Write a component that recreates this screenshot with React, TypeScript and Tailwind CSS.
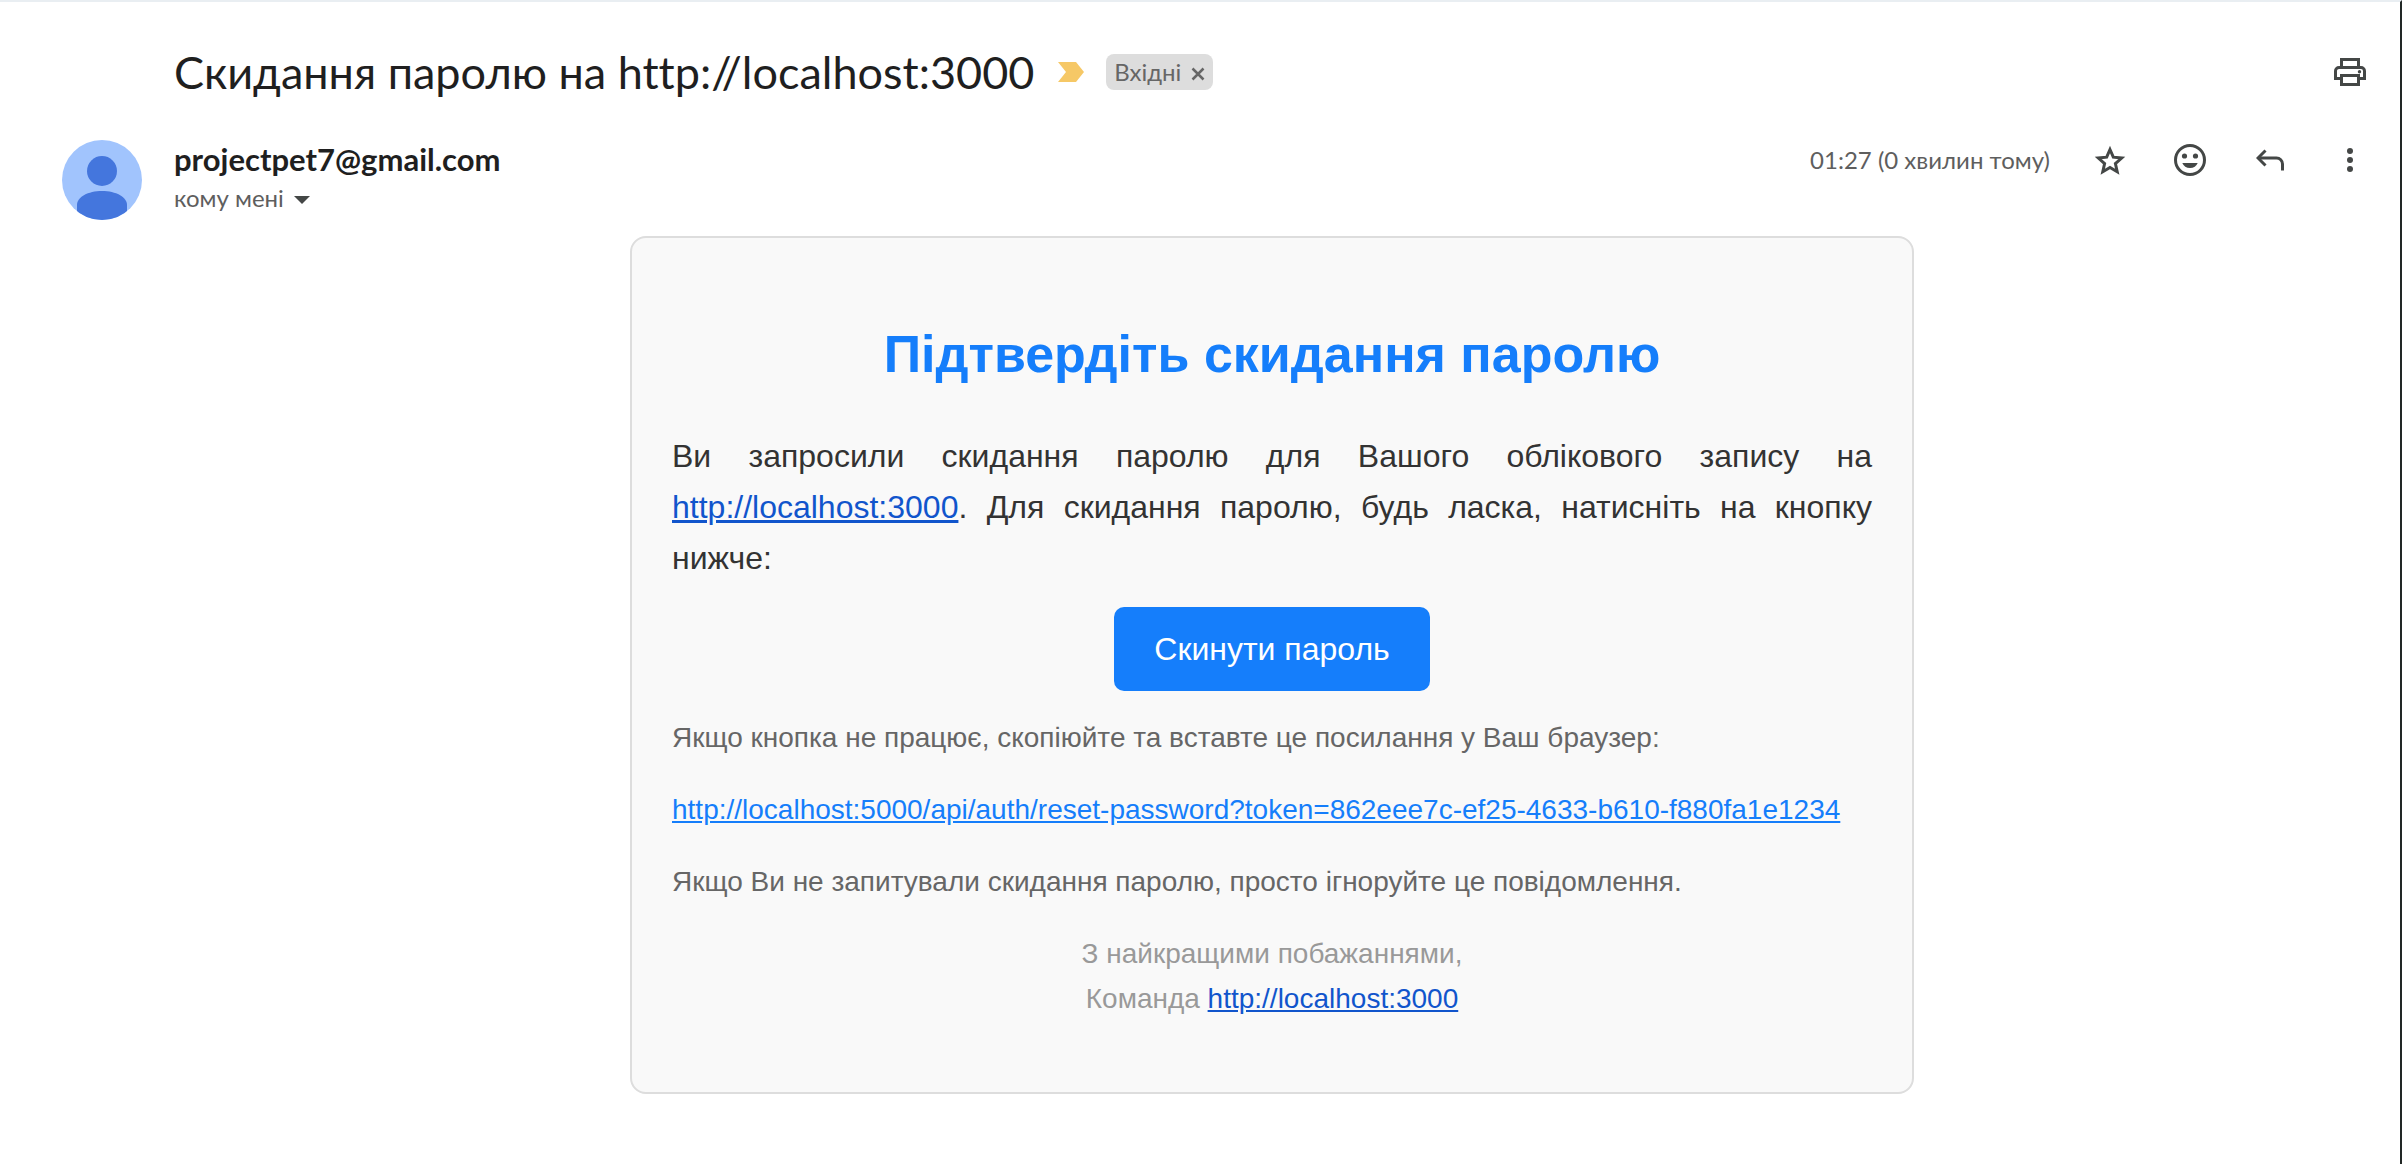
import type { ReactNode } from "react";

const SITE_URL = "http://localhost:3000";
const RESET_URL =
  "http://localhost:5000/api/auth/reset-password?token=862eee7c-ef25-4633-b610-f880fa1e1234";

function IconButton({ label, children }: { label: string; children: ReactNode }) {
  return (
    <button
      type="button"
      aria-label={label}
      className="flex size-10 items-center justify-center text-[#444746]"
    >
      {children}
    </button>
  );
}

function PrintIcon() {
  return (
    <svg viewBox="0 0 32 28" className="h-7 w-8" fill="none" stroke="currentColor" strokeWidth="3">
      <path d="M7.5 9.5V1.5h17v8" />
      <path d="M6 20.5H1.5V13a3.5 3.5 0 0 1 3.5-3.5h22a3.5 3.5 0 0 1 3.5 3.5v7.5H26" />
      <path d="M7.5 17.5h17v9h-17z" />
      <circle cx="25.5" cy="13.8" r="1.7" fill="currentColor" stroke="none" />
    </svg>
  );
}

function StarIcon() {
  return (
    <svg viewBox="0 0 32 30" className="h-[30px] w-8" fill="none" stroke="currentColor" strokeWidth="3">
      <path d="M16 4.5l3.3 7.7 8.4.8-6.3 5.6 1.8 8.2L16 22.5l-7.2 4.3 1.8-8.2L4.3 13l8.4-.8z" />
    </svg>
  );
}

function SmileIcon() {
  return (
    <svg viewBox="0 0 32 32" className="size-8" fill="currentColor">
      <circle cx="16" cy="16" r="14.5" fill="none" stroke="currentColor" strokeWidth="3" />
      <circle cx="10.5" cy="12" r="2.6" />
      <circle cx="21.5" cy="12" r="2.6" />
      <path d="M8.3 19h15.4c-1.2 3.1-4.1 5-7.7 5s-6.5-1.9-7.7-5z" />
    </svg>
  );
}

function ReplyIcon() {
  return (
    <svg viewBox="0 0 28 22" className="h-[22px] w-7" fill="none" stroke="currentColor" strokeWidth="3">
      <path d="M9.5 1.5L2 9l7.5 7.5" />
      <path d="M2 9h18.5a6 6 0 0 1 6 6v6.5" />
    </svg>
  );
}

function MoreIcon() {
  return (
    <svg viewBox="0 0 6 24" className="h-6 w-1.5" fill="currentColor">
      <circle cx="3" cy="3" r="3" />
      <circle cx="3" cy="12" r="3" />
      <circle cx="3" cy="21" r="3" />
    </svg>
  );
}

function Avatar() {
  return (
    <svg viewBox="0 0 80 80" className="size-20 shrink-0 rounded-full" role="img" aria-label="projectpet7">
      <rect width="80" height="80" fill="#a1c4fd" />
      <circle cx="40" cy="31" r="15" fill="#4476dd" />
      <path d="M15 80V65c0-8 11-14 25-14s25 6 25 14v15z" fill="#4476dd" />
    </svg>
  );
}

function SubjectBar() {
  return (
    <div className="flex items-center">
      <h1 className="text-[45px] leading-[56px] text-[#1f1f1f]">Скидання паролю на {SITE_URL}</h1>
      <button type="button" aria-label="Важливе" className="ml-6">
        <svg viewBox="0 0 26 20" className="h-5 w-[26px]" fill="#f6c866">
          <path d="M0 0h18l8 10-8 10H0l8-10z" />
        </svg>
      </button>
      <div className="ml-[22px] flex h-9 items-center gap-2.5 rounded-lg bg-[#ddd] px-2 text-2xl leading-8 text-[#666]">
        <span>Вхідні</span>
        <button type="button" aria-label="Видалити мітку Вхідні">
          <svg viewBox="0 0 14 14" className="mt-1 size-3.5" fill="none" stroke="currentColor" strokeWidth="2.5">
            <path d="M1.5 1.5l11 11M12.5 1.5l-11 11" />
          </svg>
        </button>
      </div>
      <div className="ml-auto">
        <IconButton label="Друкувати">
          <PrintIcon />
        </IconButton>
      </div>
    </div>
  );
}

function SenderRow() {
  return (
    <div className="flex items-start">
      <div className="flex flex-col">
        <span className="text-[31px] leading-[38px] font-bold text-[#1f1f1f]">projectpet7@gmail.com</span>
        <button type="button" className="flex items-center gap-2.5 text-2xl leading-10 text-[#5e5e5e]">
          кому мені
          <svg viewBox="0 0 16 8" className="mt-1 h-2 w-4" fill="#444746">
            <path d="M0 0h16L8 8z" />
          </svg>
        </button>
      </div>
      <div className="ml-auto flex items-center gap-10">
        <time className="text-2xl leading-10 text-[#5e5e5e]">01:27 (0 хвилин тому)</time>
        <IconButton label="Позначити зірочкою">
          <StarIcon />
        </IconButton>
        <IconButton label="Додати реакцію">
          <SmileIcon />
        </IconButton>
        <IconButton label="Відповісти">
          <ReplyIcon />
        </IconButton>
        <IconButton label="Більше">
          <MoreIcon />
        </IconButton>
      </div>
    </div>
  );
}

function MessageCard() {
  return (
    <article className="mx-auto w-full max-w-[1284px] rounded-2xl border-2 border-[#ddd] bg-[#f9f9f9] px-10 pt-[75px] pb-[71px] font-['Liberation_Sans',Arial,sans-serif] text-[28px] leading-[45px] text-[#666]">
      <h2 className="text-center text-[52px] leading-[83px] font-bold text-[#157efb]">
        Підтвердіть скидання паролю
      </h2>
      <p className="mt-[35px] text-justify text-[32px] leading-[51px] text-[#333]">
        Ви запросили скидання паролю для Вашого облікового запису на{" "}
        <a href={SITE_URL} className="text-[#1155cc] underline decoration-[3px]">
          {SITE_URL}
        </a>
        . Для скидання паролю, будь ласка, натисніть на кнопку нижче:
      </p>
      <div className="mt-[23px] flex justify-center">
        <button
          type="button"
          className="rounded-[10px] bg-[#157efb] px-10 py-6 text-[32px] leading-9 text-white"
        >
          Скинути пароль
        </button>
      </div>
      <div className="mt-6 flex flex-col gap-[27px]">
        <p>Якщо кнопка не працює, скопіюйте та вставте це посилання у Ваш браузер:</p>
        <p>
          <a href={RESET_URL} className="text-[#157efb] underline">
            {RESET_URL}
          </a>
        </p>
        <p>Якщо Ви не запитували скидання паролю, просто ігноруйте це повідомлення.</p>
        <p className="text-center text-[#999]">
          З найкращими побажаннями,
          <br />
          Команда{" "}
          <a href={SITE_URL} className="text-[#1155cc] underline">
            {SITE_URL}
          </a>
        </p>
      </div>
    </article>
  );
}

export default function App() {
  return (
    <main className="min-h-screen border-t-2 border-r-2 border-t-[#e9eef2] border-r-[#222826] bg-white pt-[42px] pr-[30px] pb-[70px] pl-[62px] font-[Lato,sans-serif] [font-variant-ligatures:none]">
      <div className="pl-28">
        <SubjectBar />
      </div>
      <div className="mt-10 flex items-start gap-8">
        <Avatar />
        <div className="min-w-0 grow">
          <SenderRow />
          <div className="mt-[18px]">
            <MessageCard />
          </div>
        </div>
      </div>
    </main>
  );
}
